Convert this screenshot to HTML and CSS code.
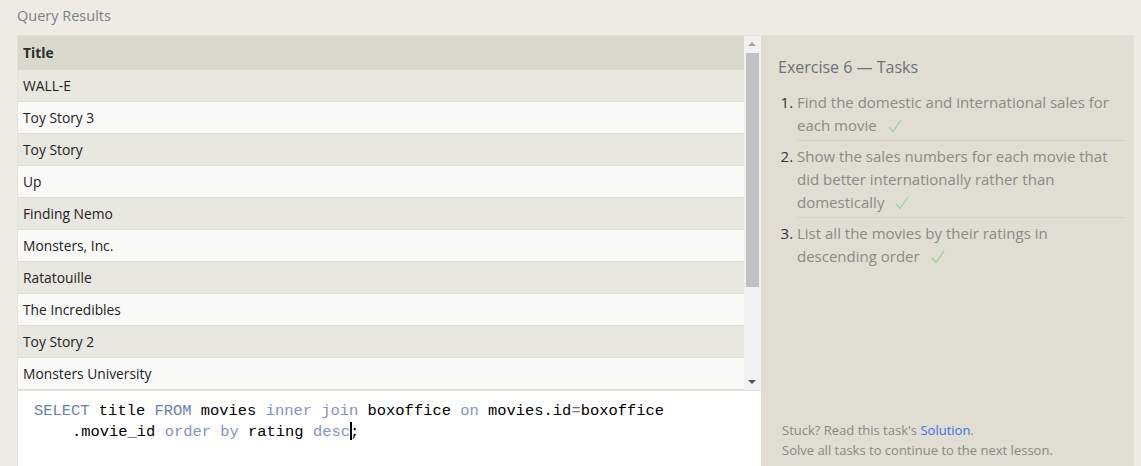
FILE: index.html
```html
<!DOCTYPE html>
<html lang="en">
<head>
<meta charset="utf-8">
<title>Query Results</title>
<link rel="stylesheet" href="styles.css">
</head>
<body>
<div class="page">
  <div class="caption">Query Results</div>
  <div class="main">
    <div class="left">
      <div class="results">
        <div class="table">
          <div class="row head">Title</div>
          <div class="row odd">WALL-E</div>
          <div class="row even">Toy Story 3</div>
          <div class="row odd">Toy Story</div>
          <div class="row even">Up</div>
          <div class="row odd">Finding Nemo</div>
          <div class="row even">Monsters, Inc.</div>
          <div class="row odd">Ratatouille</div>
          <div class="row even">The Incredibles</div>
          <div class="row odd">Toy Story 2</div>
          <div class="row even">Monsters University</div>
        </div>
        <div class="scrollbar">
          <div class="arrow up"></div>
          <div class="track"><div class="thumb"></div></div>
          <div class="arrow down"></div>
        </div>
      </div>
      <div class="editor">
        <div class="code"><span class="kw">SELECT</span> title <span class="kw">FROM</span> movies <span class="kw2">inner</span> <span class="kw2">join</span> boxoffice <span class="kw2">on</span> movies.id<span class="op">=</span>boxoffice</div>
        <div class="code cont">.movie_id <span class="kw2">order</span> <span class="kw2">by</span> rating <span class="kw2">desc</span><span class="caret"></span>;</div>
      </div>
    </div>
    <div class="panel">
      <h2 class="panel-title">Exercise 6 — Tasks</h2>
      <ol class="tasks">
        <li>Find the domestic and international sales for each movie<svg class="check" viewBox="0 0 14 14" width="14" height="14"><polyline points="1,8 5,12.5 13,1" /></svg></li>
        <li>Show the sales numbers for each movie that did better internationally rather than domestically<svg class="check" viewBox="0 0 14 14" width="14" height="14"><polyline points="1,8 5,12.5 13,1" /></svg></li>
        <li>List all the movies by their ratings in descending order<svg class="check" viewBox="0 0 14 14" width="14" height="14"><polyline points="1,8 5,12.5 13,1" /></svg></li>
      </ol>
      <div class="footer">
        <div>Stuck? Read this task's <a class="link" href="#">Solution</a>.</div>
        <div>Solve all tasks to continue to the next lesson.</div>
      </div>
    </div>
  </div>
</div>
</body>
</html>
```
FILE: styles.css
```css
html, body {
  margin: 0;
  padding: 0;
  height: 466px;
  overflow: hidden;
  background: #eeebe4;
  font-family: "Open Sans", "Noto Sans", sans-serif;
}
.page {
  padding: 0 7px 0 17px;
}
.caption {
  height: 35px;
  line-height: 32px;
  font-size: 14.5px;
  color: #7b8089;
}
.main {
  display: flex;
  height: 440px;
  border: 1px solid #e4e2da;
  border-bottom: none;
}
.left {
  width: 743px;
  display: flex;
  flex-direction: column;
}
.results {
  display: flex;
  height: 354px;
  overflow: hidden;
}
.table {
  flex: 1;
}
.row {
  box-sizing: border-box;
  height: 32px;
  line-height: 31px;
  padding-left: 5px;
  font-size: 13.8px;
  color: #222;
  border-bottom: 1px solid #dddcd5;
}
.row.head {
  height: 34px;
  background: #d9d8cc;
  font-weight: 700;
  color: #2b2b2b;
  border-bottom: none;
  line-height: 34px;
}
.row.odd { background: #e9e8e0; }
.row.even { background: #f9f9f8; }
.scrollbar {
  width: 17px;
  background: #f1f1f1;
  display: flex;
  flex-direction: column;
}
.arrow {
  height: 17px;
  position: relative;
}
.arrow::after {
  content: "";
  position: absolute;
  left: 4px;
  width: 0;
  height: 0;
  border-left: 4px solid transparent;
  border-right: 4px solid transparent;
}
.arrow.up::after {
  top: 6px;
  border-bottom: 4px solid #a3a3a3;
}
.arrow.down::after {
  top: 7px;
  border-top: 4px solid #505050;
}
.track {
  flex: 1;
  padding: 0 2px;
}
.thumb {
  height: 234px;
  background: #c1c1c1;
}
.editor {
  flex: 1;
  background: #ffffff;
  padding: 10px 0 0 16px;
  border-top: 1px solid #e2e1da;
}
.code {
  font-family: "Liberation Mono", "DejaVu Sans Mono", monospace;
  font-size: 15.45px;
  line-height: 21px;
  color: #000;
  white-space: pre;
}
.code.cont {
  padding-left: 38px;
}
.kw { color: #6b7db0; }
.kw2 { color: #8393c3; }
.op { color: #777; }
.caret {
  display: inline-block;
  width: 2px;
  height: 18px;
  background: #000;
  vertical-align: -4px;
  margin-right: -2px;
}
.panel {
  flex: 1;
  background: #e0ded3;
  display: flex;
  flex-direction: column;
  padding: 0 8px 0 17px;
}
.panel-title {
  margin: 20px 0 0;
  font-size: 16px;
  font-weight: 400;
  line-height: 22px;
  color: #6c7079;
}
.tasks {
  margin: 9px 0 0;
  padding: 0 0 0 19px;
  font-size: 15px;
  line-height: 23px;
  color: #8b8a85;
}
.tasks li {
  padding: 4px 0 3px;
  border-bottom: 1px solid #d3d1c6;
}
.tasks li:last-child {
  border-bottom: none;
}
.tasks li::marker {
  color: #333;
}
.check {
  display: inline-block;
  vertical-align: -2px;
  margin-left: 11px;
  fill: none;
  stroke: #9ed09c;
  stroke-width: 1.3;
}
.footer {
  margin-top: auto;
  padding: 0 0 16px 4px;
  font-size: 13px;
  line-height: 20px;
  color: #898883;
}
.link {
  color: #3d6ee5;
  text-decoration: none;
}
```
